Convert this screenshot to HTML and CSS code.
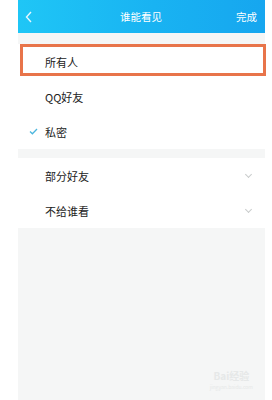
FILE: index.html
```html
<!DOCTYPE html>
<html lang="zh-CN">
<head>
  <meta charset="UTF-8">
  <title>谁能看见</title>
  <link rel="stylesheet" href="styles.css">
</head>
<body>

<div class="phone">
  <div class="topbar">
    <span class="side">
      <svg class="back" width="8" height="12" viewBox="0 0 8 12">
        <polyline points="6,1 1.5,6 6,11" fill="none" stroke="#e6f7ff" stroke-width="1.4"/>
      </svg>
    </span>
    <span class="title">谁能看见</span>
    <span class="side done">完成</span>
  </div>

  <div class="group first">
    <div class="row marked"><span class="mark"></span><span>所有人</span></div>
    <div class="row"><span class="mark"></span><span>QQ好友</span></div>
    <div class="row">
      <span class="mark">
        <svg width="9" height="7" viewBox="0 0 9 7">
          <polyline points="1,3.5 3.4,5.8 8,1" fill="none" stroke="#4cb6de" stroke-width="1.3"/>
        </svg>
      </span>
      <span>私密</span>
    </div>
  </div>

  <div class="group">
    <div class="row"><span class="mark"></span><span class="grow">部分好友</span><span class="arrow"></span></div>
    <div class="row"><span class="mark"></span><span class="grow">不给谁看</span><span class="arrow"></span></div>
  </div>

  <div class="watermark">
    <div class="wm-big">Bai<span>经验</span></div>
    <div class="wm-small">jingyan.baidu.com</div>
  </div>
</div>

</body>
</html>
```

FILE: styles.css
```css
body {
  margin: 0;
  background: #fff;
  font-family: "Noto Sans CJK SC", "Liberation Sans", sans-serif;
}
.phone {
  position: relative;
  margin-left: 18px;
  width: 247px;
  height: 400px;
  background: #f5f6f6;
}
.topbar {
  height: 33px;
  display: flex;
  align-items: center;
  padding: 0 8px 0 7px;
  background: linear-gradient(90deg, #1fc6f6, #19b3f2 55%, #16a6ef);
  color: #fff;
  font-size: 10.5px;
}
.side {
  flex: 1;
  display: flex;
  align-items: center;
}
.done {
  justify-content: flex-end;
}
.title {
  text-align: center;
}
.group {
  background: #fff;
  margin-top: 9px;
}
.group.first {
  margin-top: 11px;
}
.row {
  height: 35px;
  display: flex;
  align-items: center;
  font-size: 11px;
  color: #222;
}
.row.marked {
  position: relative;
}
.row.marked::after {
  content: "";
  position: absolute;
  top: 0;
  left: 2px;
  right: -1px;
  height: 32px;
  border: 3px solid #e8744a;
  box-sizing: border-box;
}
.mark {
  width: 27px;
  display: flex;
  justify-content: center;
  padding-left: 4px;
  box-sizing: border-box;
}
.grow {
  flex: 1;
}
.arrow {
  width: 4px;
  height: 4px;
  margin-right: 14px;
  margin-top: -3px;
  border-right: 1px solid #c9cccc;
  border-bottom: 1px solid #c9cccc;
  transform: rotate(45deg);
}
.watermark {
  position: absolute;
  right: 12px;
  bottom: 10px;
  color: #e6e8e8;
  text-align: center;
}
.wm-big {
  font-size: 10px;
  font-weight: bold;
}
.wm-small {
  font-size: 5px;
}
```
